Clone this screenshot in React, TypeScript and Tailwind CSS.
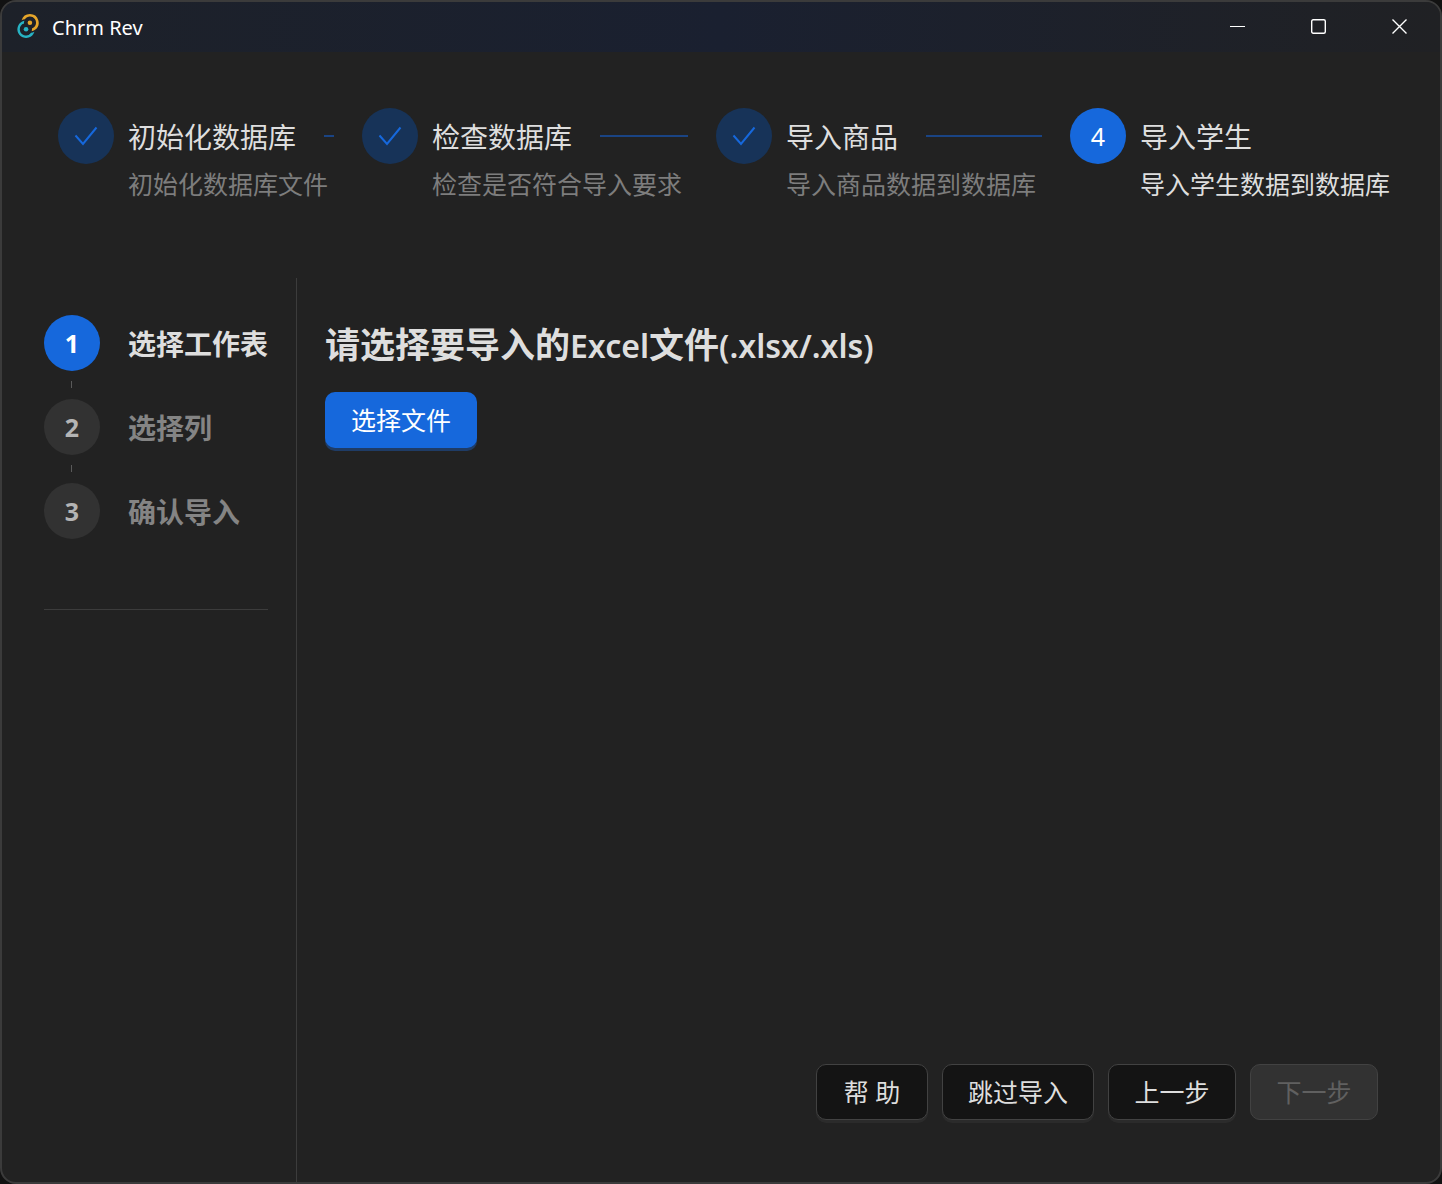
const importSteps = [
  { title: "初始化数据库", description: "初始化数据库文件", done: true },
  { title: "检查数据库", description: "检查是否符合导入要求", done: true },
  { title: "导入商品", description: "导入商品数据到数据库", done: true },
  { title: "导入学生", description: "导入学生数据到数据库", done: false },
];

const sheetSteps = ["选择工作表", "选择列", "确认导入"];

function Logo() {
  return (
    <svg className="mb-0.5 h-6 w-6" viewBox="0 0 24 24" aria-hidden="true">
      <g fill="#e5a52a">
        <path d="M13.912 0a8.72 8.72 0 0 0-8.308 6.139c1.05-.515 2.18-.845 3.342-.976 2.415-3.363 7.4-3.412 9.88-.097 2.48 3.315 1.025 8.084-2.883 9.45a6.131 6.131 0 0 1-.3 2.762 8.72 8.72 0 0 0 3.01-1.225A8.72 8.72 0 0 0 13.913 0z" />
        <circle cx="13.92" cy="8.73" r="2.28" />
      </g>
      <g fill="#27b3c4">
        <path d="M8.365 6.721a8.72 8.72 0 0 0-3.031 1.235 8.72 8.72 0 1 0 13.06 9.913 10.174 10.174 0 0 1-3.343.965 6.125 6.125 0 0 1-7.028 2.343 6.126 6.126 0 0 1 .038-11.656 6.083 6.083 0 0 1 .304-2.8z" />
        <circle cx="10.05" cy="15.3" r="2.28" />
      </g>
    </svg>
  );
}

function TitleBar() {
  const control = "flex h-full w-[81px] items-center justify-center text-white";
  return (
    <header className="flex h-[50px] shrink-0 items-center bg-linear-to-r from-[#1d2129] via-[#1a2030] to-[#202124] pl-3.5">
      <Logo />
      <h1 className="ml-3 flex-1 pt-0.5 text-xl text-white">Chrm Rev</h1>
      <button aria-label="最小化" className={control}>
        <svg width="16" height="16" viewBox="0 0 16 16" fill="none" stroke="currentColor">
          <path d="M0 7.5H15" />
        </svg>
      </button>
      <button aria-label="最大化" className={control}>
        <svg width="16" height="16" viewBox="0 0 16 16" fill="none" stroke="currentColor" strokeWidth="1.4">
          <rect x=".7" y=".7" width="13.6" height="13.6" rx="1.5" />
        </svg>
      </button>
      <button aria-label="关闭" className={control}>
        <svg width="16" height="16" viewBox="0 0 16 16" fill="none" stroke="currentColor" strokeWidth="1.4">
          <path d="M.5 .5L14.5 14.5M14.5 .5L.5 14.5" />
        </svg>
      </button>
    </header>
  );
}

function ImportSteps() {
  return (
    <ol className="flex pt-14 pr-[50px] pl-14">
      {importSteps.map((step, idx) => {
        const last = idx === importSteps.length - 1;
        return (
          <li key={step.title} className={`flex gap-3.5 ${last ? "flex-none" : "flex-auto pr-7"}`}>
            <span
              className={`flex size-14 shrink-0 items-center justify-center rounded-full text-[25px] ${
                step.done ? "bg-[#173358] text-[#1668dc]" : "bg-[#1668dc] pt-0.5 text-white"
              }`}
            >
              {step.done ? (
                <svg width="24" height="20" viewBox="0 0 24 20" fill="none" stroke="currentColor" strokeWidth="2" aria-label="已完成">
                  <path d="M1.5 9.5L9 18L22.5 1.5" />
                </svg>
              ) : (
                idx + 1
              )}
            </span>
            <div className="flex-1 whitespace-nowrap">
              <div className="flex h-14 items-center gap-7">
                <h2 className="pt-0.5 text-[28px] text-[#dedede]">{step.title}</h2>
                {!last && <span className="h-0.5 flex-1 bg-[#1a4484]" />}
              </div>
              <p className={`text-[25px] leading-10 ${step.done ? "text-[#7d7d7d]" : "text-[#dedede]"}`}>
                {step.description}
              </p>
            </div>
          </li>
        );
      })}
    </ol>
  );
}

function SheetSteps() {
  return (
    <aside className="w-[295px] shrink-0 border-r border-[#3c3c3c] pt-[37px] pr-7 pl-[42px]">
      <ol className="font-bold">
        {sheetSteps.map((title, idx) => (
          <li key={title}>
            {idx > 0 && (
              <div className="h-7 pt-2.5 pl-[27px]">
                <div className="h-[7px] w-px bg-[#5a5a5a]" />
              </div>
            )}
            <div className="flex items-center gap-7 whitespace-nowrap">
              <span
                className={`flex size-14 items-center justify-center rounded-full pt-0.5 text-[25px] ${
                  idx === 0 ? "bg-[#1668dc] text-white" : "bg-[#323232] text-[#b4b4b4]"
                }`}
              >
                {idx + 1}
              </span>
              <span className={`pt-0.5 text-[28px] ${idx === 0 ? "text-[#dedede]" : "text-[#848484]"}`}>{title}</span>
            </div>
          </li>
        ))}
      </ol>
      <hr className="mt-[70px] border-[#3c3c3c]" />
    </aside>
  );
}

export default function App() {
  const button =
    "h-14 rounded-[10px] border border-[#424242] bg-[#141414] px-[25px] pt-0.5 text-[25px] text-[#dedede] shadow-[0_3px_0_#2b2b2b] disabled:bg-[#323232] disabled:text-[#606060] disabled:shadow-none";

  return (
    <div className="min-h-screen bg-[#121212] font-['Noto_Sans','Noto_Sans_CJK_SC',sans-serif]">
      <div className="flex min-h-screen flex-col overflow-hidden rounded-2xl border-2 border-[#3b3b3b] bg-[#222222]">
        <TitleBar />
        <ImportSteps />
        <div className="mt-[74px] flex flex-1">
          <SheetSteps />
          <main className="flex flex-1 flex-col pl-7">
            <h2 className="mt-[43px] text-[35px] leading-12 font-bold text-[#dedede]">
              请选择要导入的<span className="text-[32px] font-semibold">Excel</span>文件
              <span className="text-[32px] font-semibold">(.xlsx/.xls)</span>
            </h2>
            <button className="mt-[22px] h-14 self-start rounded-[10px] bg-[#1668dc] px-[26px] pt-0.5 text-[25px] text-white shadow-[0_3px_0_#1f3c66]">
              选择文件
            </button>
            <footer className="mt-auto flex justify-end gap-3.5 pr-[62px] pb-[62px]">
              <button className={`${button} min-w-28`}>帮 助</button>
              <button className={button}>跳过导入</button>
              <button className={`${button} min-w-32`}>上一步</button>
              <button className={`${button} min-w-32`} disabled>
                下一步
              </button>
            </footer>
          </main>
        </div>
      </div>
    </div>
  );
}
